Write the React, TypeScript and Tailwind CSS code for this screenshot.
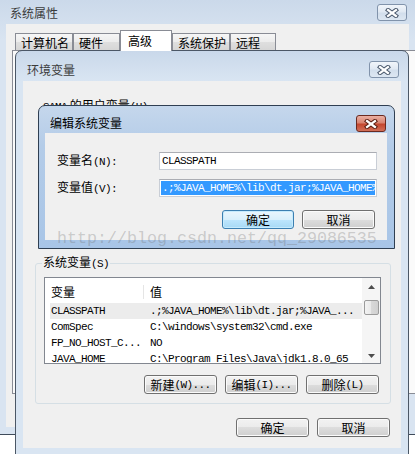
import React from 'react'

const mono = "font-['Liberation_Mono',monospace] text-[11px] tracking-[-0.6px]"

function A({ children }: { children: React.ReactNode }) {
  return <span className={mono}>{children}</span>
}

function CloseBtn({ active, className }: { active?: boolean; className?: string }) {
  const box = active
    ? 'border-[#6a2a20] bg-[linear-gradient(to_bottom,#eab0a3,#d98471_45%,#c4472f_55%,#d26f58)]'
    : 'border-[#8193ab] bg-[linear-gradient(to_bottom,#f1f5fa,#e1e9f3_45%,#d2deec_55%,#dde7f2)]'
  return (
    <div className={`flex h-[17px] w-[30px] items-center justify-center rounded-[3px] border ${box} ${className ?? ''}`}>
      <svg width="16" height="10" viewBox="0 0 16 10">
        <path d="M4 2 L12 8 M12 2 L4 8" stroke={active ? '#5a1d12' : '#4a586c'} strokeWidth="4.2" strokeLinecap="square" fill="none" />
        <path d="M4 2 L12 8 M12 2 L4 8" stroke="#ffffff" strokeWidth="2.2" strokeLinecap="square" fill="none" />
      </svg>
    </div>
  )
}

function Btn({ children, className, focus }: { children: React.ReactNode; className?: string; focus?: boolean }) {
  const look = focus
    ? 'border-[#3c7fb1] bg-[linear-gradient(to_bottom,#eaf6fd,#d9f0fc_50%,#bee6fd_50%,#a7d9f5)] shadow-[inset_0_0_0_1px_#c6ebfd]'
    : 'border-[#707070] bg-[linear-gradient(to_bottom,#f2f2f2,#ebebeb_50%,#dddddd_50%,#cfcfcf)] shadow-[inset_0_0_0_1px_#fbfbfb]'
  return (
    <div className={`flex h-[19px] items-center justify-center rounded-[3px] border ${look} ${className ?? ''}`}>
      {children}
    </div>
  )
}

function Tab({ children, className, active }: { children: React.ReactNode; className?: string; active?: boolean }) {
  if (active) {
    return (
      <div className={`relative z-10 -mb-px flex h-[21px] items-center border border-b-0 border-[#898c95] bg-white pl-[7px] ${className ?? ''}`}>
        {children}
      </div>
    )
  }
  return (
    <div className={`flex h-[17px] items-center border border-b-0 border-[#898c95] bg-[linear-gradient(to_bottom,#f6f6f6,#ececec_50%,#dfdfdf_50%,#d6d6d6)] pl-[5px] pt-[2px] ${className ?? ''}`}>
      {children}
    </div>
  )
}

function Arrow({ up }: { up?: boolean }) {
  return (
    <svg width="7" height="4" viewBox="0 0 7 4">
      <path d={up ? 'M0 4 L3.5 0 L7 4 Z' : 'M0 0 L3.5 4 L7 0 Z'} fill="#4d4d4d" />
    </svg>
  )
}

const rows: [string, string][] = [
  ['CLASSPATH', '.;%JAVA_HOME%\\lib\\dt.jar;%JAVA_...'],
  ['ComSpec', 'C:\\windows\\system32\\cmd.exe'],
  ['FP_NO_HOST_C...', 'NO'],
  ['JAVA_HOME', 'C:\\Program Files\\Java\\jdk1.8.0_65'],
]

export default function App() {
  return (
    <div className="relative h-[454px] w-[415px] overflow-hidden bg-white font-['Noto_Sans_CJK_SC',sans-serif] text-[12px] leading-[14px] text-black">
      {/* 系统属性 */}
      <div className="flex h-[435px] flex-col border-b border-[#3f4b5a] bg-[linear-gradient(to_bottom,#cbd9ea,#d9e4f1_40px,#d9e4f1)]">
        <div className="flex h-[24px] items-start justify-between pl-[10px] pr-[8px]">
          <span className="mt-[6px] text-[#3b3b3b]">系统属性</span>
          <CloseBtn className="mt-[4px]" />
        </div>
        <div className="ml-[6px] h-[403px] w-[403px] bg-[#f0f0f0]">
          <div className="ml-[9px] mt-[6px] flex h-[20px] items-end">
            <Tab className="w-[58px]">计算机名</Tab>
            <Tab className="w-[47px]">硬件</Tab>
            <Tab className="w-[52px]" active>高级</Tab>
            <Tab className="w-[58px]">系统保护</Tab>
            <Tab className="w-[46px]">远程</Tab>
          </div>
          <div className="ml-[6px] h-[344px] w-[420px] border border-[#898c95] bg-[#fafafa]" />
        </div>
      </div>

      {/* 环境变量 */}
      <div className="absolute left-[15px] top-[50px] flex h-[420px] w-[394px] flex-col rounded-t-[7px] border border-[#4b5766] bg-[linear-gradient(to_bottom,#c9d8ea,#d9e5f2_30px,#d9e5f2)]">
        <div className="flex h-[30px] items-start justify-between pl-[11px] pr-[9px]">
          <span className="mt-[12px] text-[#3b3b3b]">环境变量</span>
          <CloseBtn className="mt-[10px]" />
        </div>
        <div className="mx-[7px] flex h-[367px] w-[378px] flex-col bg-[#f0f0f0]">
          <div className="h-[174px] pl-[20px] pt-[17px]">
            <A>SAMA</A> 的用户变量<A>(U)</A>
          </div>
          <fieldset className="mx-[12px] h-[149px] w-[356px] rounded-[3px] border border-[#d5dfe5]">
            <legend className="ml-[6px] px-[1px] leading-[14px]">
              系统变量<A>(S)</A>
            </legend>
            <div className="ml-[8px] mt-[6px] flex h-[87px] w-[337px] border border-[#828790] bg-white">
              <div className="w-[317px] overflow-hidden">
                <div className="flex h-[25px] items-center pt-[3px]">
                  <div className="w-[99px] border-r border-[#e5e5e5] pl-[6px]">变量</div>
                  <div className="pl-[6px]">值</div>
                </div>
                {rows.map(([k, v], i) => (
                  <div
                    key={k}
                    className={`ml-[5px] flex h-[16px] items-center whitespace-nowrap ${mono} ${i === 0 ? 'bg-[#ececec]' : ''}`}
                  >
                    <div className="w-[94px] pl-[1px]">{k}</div>
                    <div className="pl-[6px]">{v}</div>
                  </div>
                ))}
              </div>
              <div className="flex w-[18px] flex-col items-center bg-[#f5f5f5]">
                <div className="flex h-[22px] items-center justify-center pb-[4px]">
                  <Arrow up />
                </div>
                <div className="h-[15px] w-[15px] rounded-[2px] border border-[#9b9b9b] bg-[linear-gradient(to_right,#f3f3f3,#e8e8e8_50%,#d8d8d8_50%,#d0d0d0)]" />
                <div className="flex-1" />
                <div className="flex h-[17px] items-center justify-center pt-[2px]">
                  <Arrow />
                </div>
              </div>
            </div>
            <div className="mt-[11px] flex justify-end gap-[8px] pr-[11px]">
              <Btn className="w-[73px]">
                新建<A>(W)...</A>
              </Btn>
              <Btn className="w-[73px]">
                编辑<A>(I)...</A>
              </Btn>
              <Btn className="w-[73px]">
                删除<A>(L)</A>
              </Btn>
            </div>
          </fieldset>
          <div className="mt-[14px] flex justify-end gap-[8px] pr-[11px]">
            <Btn className="w-[73px]">确定</Btn>
            <Btn className="w-[73px]">取消</Btn>
          </div>
        </div>
      </div>

      {/* 编辑系统变量 */}
      <div className="absolute left-[38px] top-[105px] flex h-[144px] w-[357px] flex-col rounded-t-[7px] border border-[#2f3f52] bg-[linear-gradient(to_bottom,#c5d7ec,#b4cce8_40px,#a8c5e7)]">
        <div className="flex h-[27px] items-start justify-between pl-[11px] pr-[8px]">
          <span className="mt-[10px]">编辑系统变量</span>
          <CloseBtn active className="mt-[9px]" />
        </div>
        <div className="mx-[6px] h-[107px] w-[342px] bg-[#f0f0f0] pt-[19px]">
          <div className="flex items-center">
            <div className="w-[114px] pl-[12px]">
              变量名<A>(N):</A>
            </div>
            <div className={`flex h-[18px] w-[218px] items-center border border-[#c9ced6] border-t-[#abadb3] bg-white pl-[2px] ${mono}`}>
              CLASSPATH
            </div>
          </div>
          <div className="mt-[9px] flex items-center">
            <div className="w-[114px] pl-[12px]">
              变量值<A>(V):</A>
            </div>
            <div className="h-[18px] w-[218px] border border-[#c9ced6] border-t-[#abadb3] bg-white p-px">
              <div className={`flex h-full items-center overflow-hidden whitespace-nowrap bg-[#3399ff] pl-px text-white ${mono}`}>
                {'.;%JAVA_HOME%\\lib\\dt.jar;%JAVA_HOME%\\lib\\tools.jar'}
              </div>
            </div>
          </div>
          <div className="mt-[13px] flex justify-end gap-[8px] pr-[12px]">
            <Btn className="w-[72px]" focus>
              确定
            </Btn>
            <Btn className="w-[73px]">取消</Btn>
          </div>
        </div>
      </div>

      {/* watermark */}
      <div className="pointer-events-none absolute left-[57px] top-[230px] whitespace-nowrap font-['Liberation_Mono',monospace] text-[16.67px] leading-[17px] text-[rgba(110,110,110,0.3)]">
        http://blog.csdn.net/qq_29086535
      </div>
    </div>
  )
}
